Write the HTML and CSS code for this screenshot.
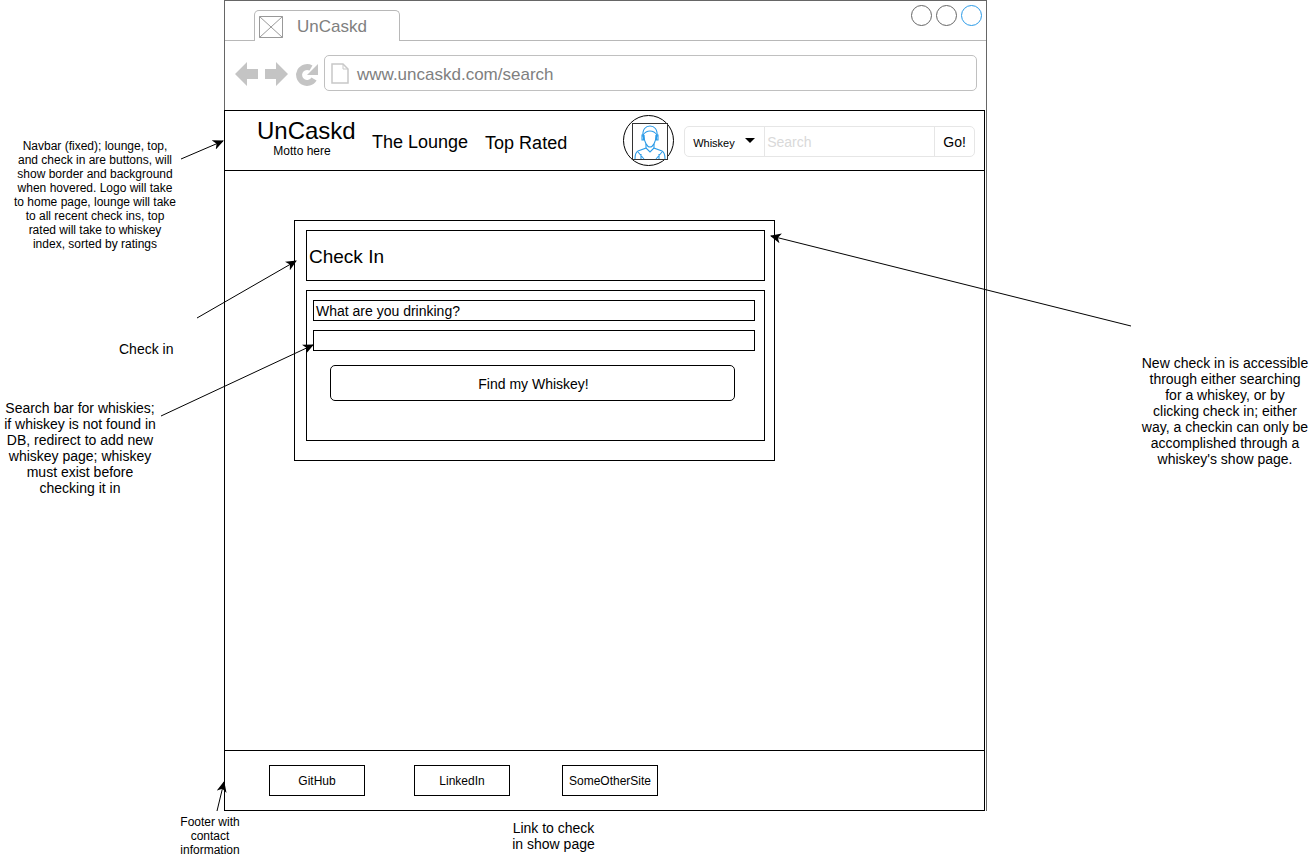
FILE: index.html
```html
<!DOCTYPE html>
<html lang="en">
<head>
    <meta charset="UTF-8">
    <meta name="viewport" content="width=device-width, initial-scale=1.0">
    <title>UnCaskd wireframe</title>
    <link rel="stylesheet" href="styles.css">
</head>
<body>
    <div class="canvas">
        <div class="window">
            <div class="tabstrip">
                <div class="tab">
                    <svg class="tab-icon" width="24" height="22" viewBox="0 0 24 22">
                        <path d="M.5.5h23v21H.5zM.5.5l23 21M23.500.5l-23 21" fill="none" stroke="#999"/>
                    </svg>
                    <span>UnCaskd</span>
                </div>
                <div class="window-buttons">
                    <span class="window-button"></span>
                    <span class="window-button"></span>
                    <span class="window-button window-button-blue"></span>
                </div>
            </div>

            <div class="addressbar">
                <svg class="nav-icons" width="84" height="26" viewBox="0 0 84 26">
                    <path d="M0 13 12 1v7h11v10H12v7z" fill="#c4c4c4"/>
                    <path d="M53 13 41 1v7H30v10h11v7z" fill="#c4c4c4"/>
                    <path d="M79 18A8 8 0 1 1 76 7" fill="none" stroke="#c4c4c4" stroke-width="6"/>
                    <path d="M83 3v11H72z" fill="#c4c4c4"/>
                </svg>
                <div class="url">
                    <svg width="18" height="21" viewBox="0 0 18 21">
                        <path d="M1 1h11l5 5v14H1z" fill="#fff" stroke="#c8c8c8" stroke-width="1.500"/>
                        <path d="M12 1v5h5" fill="none" stroke="#c8c8c8"/>
                    </svg>
                    <span class="url-text">www.uncaskd.com/search</span>
                </div>
            </div>

            <div class="page">
                <nav class="navbar">
                    <div class="logo">
                        <a href="#">UnCaskd</a>
                        <small>Motto here</small>
                    </div>
                    <a class="nav-link" href="#">The Lounge</a>
                    <a class="nav-link nav-link-top" href="#">Top Rated</a>
                    <div class="avatar">
                        <svg width="36" height="37" viewBox="0 0 36 37">
                            <rect x=".5" y=".5" width="35" height="36" fill="#fff" stroke="#333"/>
                            <g fill="none" stroke="#2b9be8" stroke-width="1.100">
                                <path d="M11 14c-1-8 3-11 7-11s8 3 7 11"/>
                                <path d="M11 12c2-3 5-4 7-4s5 1 7 4"/>
                                <path d="M12 12c0 7 3 12 6 12s6-5 6-12"/>
                                <path d="M10 12h1.500v5H10zM24.500 12H26v5h-1.500z"/>
                                <path d="M14 21v4l-8 3c-2 1-3 4-3 8M22 21v4l8 3c2 1 3 4 3 8"/>
                                <path d="M14 25l4 4 4-4M9 36v-5M27 36v-5M6 29l6 7M30 29l-6 7"/>
                            </g>
                        </svg>
                    </div>
                    <form class="search">
                        <div class="search-type">Whiskey <i class="caret"></i></div>
                        <input class="search-input" type="text" placeholder="Search">
                        <button class="search-go" type="button">Go!</button>
                    </form>
                </nav>

                <main class="content">
                    <section class="panel">
                        <h1 class="panel-title">Check In</h1>
                        <div class="panel-body">
                            <div class="field">What are you drinking?</div>
                            <div class="field"></div>
                            <button class="find-button" type="button">Find my Whiskey!</button>
                        </div>
                    </section>
                </main>

                <footer class="footer">
                    <a class="footer-link" href="#">GitHub</a>
                    <a class="footer-link" href="#">LinkedIn</a>
                    <a class="footer-link" href="#">SomeOtherSite</a>
                </footer>
            </div>
        </div>

        <p class="note note-nav">Navbar (fixed); lounge, top,<br>and check in are buttons, will<br>show border and background<br>when hovered. Logo will take<br>to home page, lounge will take<br>to all recent check ins, top<br>rated will take to whiskey<br>index, sorted by ratings</p>
        <p class="note note-checkin">Check in</p>
        <p class="note note-search">Search bar for whiskies;<br>if whiskey is not found in<br>DB, redirect to add new<br>whiskey page; whiskey<br>must exist before<br>checking it in</p>
        <p class="note note-new">New check in is accessible<br>through either searching<br>for a whiskey, or by<br>clicking check in; either<br>way, a checkin can only be<br>accomplished through a<br>whiskey's show page.</p>
        <p class="note note-footer">Footer with<br>contact<br>information</p>
        <p class="note note-link">Link to check<br>in show page</p>

        <svg class="arrows" width="1311" height="861" viewBox="0 0 1311 861">
            <defs>
                <marker id="head" markerWidth="12" markerHeight="10" refX="10" refY="5" orient="auto" markerUnits="userSpaceOnUse">
                    <path d="M0 0 11 5 0 10 3 5z" fill="#000"/>
                </marker>
            </defs>
            <g stroke="#000" stroke-width="1" fill="none">
                <path d="M181 159 223 141" marker-end="url(#head)"/>
                <path d="M197 318 296 261" marker-end="url(#head)"/>
                <path d="M161 416 313 345" marker-end="url(#head)"/>
                <path d="M1131 326 771 236" marker-end="url(#head)"/>
                <path d="M217 811 224 782" marker-end="url(#head)"/>
            </g>
        </svg>
    </div>
</body>
</html>
```

FILE: styles.css
```css
* {
    box-sizing: border-box;
}

body {
    margin: 0;
    background-color: white;
    font-family: "Liberation Sans", Arial, sans-serif;
    color: #000;
}

a {
    color: inherit;
    text-decoration: none;
}

.canvas {
    position: relative;
    width: 1311px;
    height: 861px;
    overflow: hidden;
    padding-left: 224px;
}

/* browser chrome */
.window {
    width: 763px;
    height: 811px;
    border-top: 1px solid #666;
    border-left: 1px solid #666;
    border-right: 1px solid #666;
    display: flex;
    flex-direction: column;
}

.tabstrip {
    height: 40px;
    flex-shrink: 0;
    padding: 9px 4px 0 29px;
    border-bottom: 1px solid #b8b8b8;
    display: flex;
    justify-content: space-between;
    align-items: flex-start;
}

.tab {
    width: 146px;
    height: 31px;
    margin-bottom: -1px;
    padding: 5px 0 0 4px;
    background-color: white;
    border: 1px solid #b8b8b8;
    border-bottom: none;
    border-radius: 5px 5px 0 0;
    display: flex;
    align-items: flex-start;
    gap: 14px;
    font-size: 17px;
    line-height: 21px;
    color: #808080;
}

.window-buttons {
    display: flex;
    gap: 4px;
    margin-top: -5px;
}

.window-button {
    width: 21px;
    height: 21px;
    border: 1px solid #666;
    border-radius: 50%;
}

.window-button-blue {
    border-color: #2b9be8;
}

.addressbar {
    height: 69px;
    flex-shrink: 0;
    padding: 14px 9px 0 10px;
    display: flex;
    align-items: flex-start;
    gap: 5px;
}

.nav-icons {
    margin-top: 6px;
}

.url {
    flex: 1;
    height: 36px;
    padding-left: 6px;
    border: 1px solid #c0c0c0;
    border-radius: 5px;
    display: flex;
    align-items: center;
    gap: 8px;
    font-size: 17px;
    color: #808080;
}

.url-text {
    padding-top: 4px;
}

/* the page inside the browser */
.page {
    flex: 1;
    border: 1px solid #000;
    margin-left: -1px;
    margin-right: 1px;
    display: flex;
    flex-direction: column;
}

.navbar {
    height: 60px;
    flex-shrink: 0;
    padding: 4px 9px 0 32px;
    border-bottom: 1px solid #000;
    display: flex;
    align-items: flex-start;
}

.logo {
    width: 115px;
    flex-shrink: 0;
    padding-top: 3px;
    font-size: 24px;
    line-height: 26px;
}

.logo small {
    display: block;
    width: 90px;
    margin-top: 1px;
    text-align: center;
    font-size: 12px;
    line-height: 13px;
}

.nav-link {
    margin-top: 17px;
    font-size: 18px;
    line-height: 21px;
    white-space: nowrap;
}

.nav-link-top {
    margin-top: 18px;
    margin-left: 17px;
}

.avatar {
    width: 51px;
    height: 51px;
    flex-shrink: 0;
    margin-left: 56px;
    padding: 7px 0 0 8px;
    border: 1px solid #000;
    border-radius: 50%;
}

.avatar svg {
    display: block;
}

.search {
    width: 291px;
    height: 31px;
    flex-shrink: 0;
    margin: 11px 0 0 10px;
    border: 1px solid #e6e6e6;
    border-radius: 5px;
    display: flex;
}

.search-type {
    width: 80px;
    padding: 2px 0 0 8px;
    border-right: 1px solid #e6e6e6;
    display: flex;
    align-items: center;
    gap: 10px;
    font-size: 11px;
}

.caret {
    width: 0;
    height: 0;
    margin-top: -4px;
    border-left: 5px solid transparent;
    border-right: 5px solid transparent;
    border-top: 5px solid #000;
}

.search-input {
    flex: 1;
    min-width: 0;
    padding: 0 2px;
    border: none;
    background: none;
    font-family: inherit;
    font-size: 14px;
}

.search-input::placeholder {
    color: #d9d9d9;
    opacity: 1;
}

.search-go {
    width: 40px;
    padding: 0;
    border: none;
    border-left: 1px solid #e6e6e6;
    background: none;
    font-family: inherit;
    font-size: 14px;
    color: #000;
}

.content {
    flex: 1;
    padding: 49px 0 0 69px;
}

.panel {
    width: 481px;
    height: 241px;
    padding: 9px;
    border: 1px solid #000;
    display: flex;
    flex-direction: column;
    align-items: flex-end;
    gap: 9px;
}

.panel-title {
    width: 459px;
    height: 51px;
    margin: 0;
    padding-left: 2px;
    border: 1px solid #000;
    font-size: 19px;
    font-weight: normal;
    line-height: 51px;
}

.panel-body {
    width: 459px;
    height: 151px;
    padding: 9px 9px 9px 6px;
    border: 1px solid #000;
    display: flex;
    flex-direction: column;
    gap: 9px;
}

.field {
    height: 21px;
    flex-shrink: 0;
    padding-left: 2px;
    border: 1px solid #000;
    font-size: 14px;
    line-height: 20px;
}

.find-button {
    width: 405px;
    height: 36px;
    margin: 5px 0 0 17px;
    padding: 2px 0 0 2px;
    background: white;
    border: 1px solid #000;
    border-radius: 5px;
    font-family: inherit;
    font-size: 14px;
    color: #000;
}

.footer {
    height: 60px;
    flex-shrink: 0;
    padding: 14px 0 0 44px;
    border-top: 1px solid #000;
    display: flex;
    align-items: flex-start;
    gap: 49px;
}

.footer-link {
    width: 96px;
    height: 31px;
    border: 1px solid #000;
    text-align: center;
    font-size: 12px;
    line-height: 31px;
}

.footer-link:last-child {
    margin-left: 3px;
}

/* notes around the wireframe */
.note {
    position: absolute;
    margin: 0;
    text-align: center;
    white-space: nowrap;
}

.note-nav {
    left: 0;
    top: 139px;
    width: 190px;
    font-size: 12px;
    line-height: 14px;
}

.note-checkin {
    left: 119px;
    top: 341px;
    font-size: 14px;
    line-height: 16px;
}

.note-search {
    left: 0;
    top: 400px;
    width: 160px;
    font-size: 14px;
    line-height: 16px;
}

.note-new {
    left: 1141px;
    top: 355px;
    width: 168px;
    font-size: 14px;
    line-height: 16px;
}

.note-footer {
    left: 170px;
    top: 815px;
    width: 80px;
    font-size: 12px;
    line-height: 14px;
}

.note-link {
    left: 500px;
    top: 820px;
    width: 107px;
    font-size: 14px;
    line-height: 16px;
}

.arrows {
    position: absolute;
    left: 0;
    top: 0;
    pointer-events: none;
}
```
